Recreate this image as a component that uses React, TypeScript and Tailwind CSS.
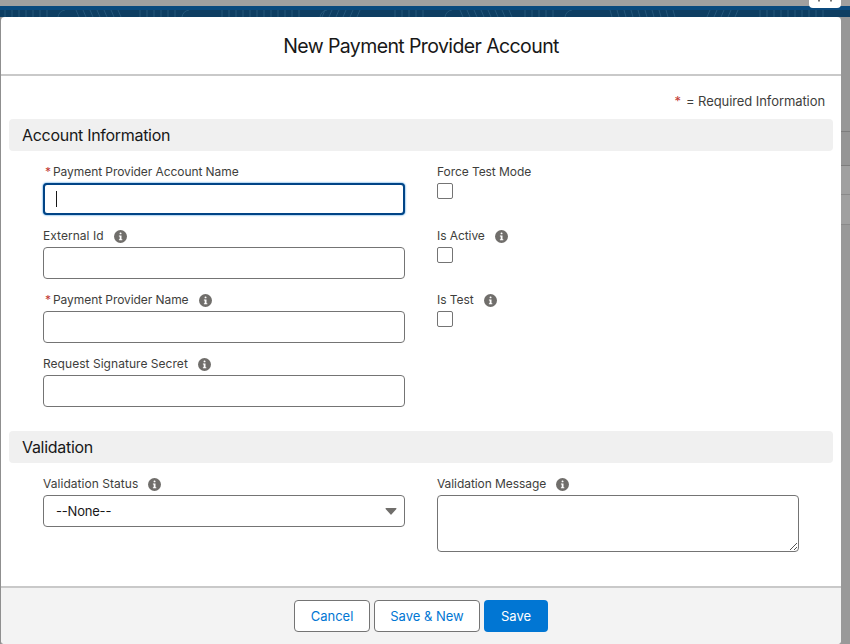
const font = "font-['Inter','Liberation_Sans',sans-serif]";

function Info() {
  return (
    <svg width="13" height="13" viewBox="0 0 13 13" className="shrink-0">
      <circle cx="6.5" cy="6.5" r="6.5" fill="#706e6b" />
      <rect x="5.6" y="2.4" width="1.9" height="1.9" rx="0.9" fill="#fff" />
      <path d="M4.9 5.4h2.6v3.8h.8v1H4.9v-1h.8V6.4h-.8z" fill="#fff" />
    </svg>
  );
}

function Label({ text, required, info, wide }: { text: string; required?: boolean; info?: boolean; wide?: boolean }) {
  return (
    <div className={`flex items-center h-[12px] mb-[5px] text-[12px] leading-[12px] text-[#3e3e3c] ${wide ? "tracking-[0.04px]" : "tracking-[-0.07px]"}`}>
      {required && <span className="text-[#c23934] mr-[2px] w-[8px] text-right">*</span>}
      <span>{text}</span>
      {info && (
        <span className="ml-[10px]">
          <Info />
        </span>
      )}
    </div>
  );
}

function TextField({ text, required, info, focused, wide }: { text: string; required?: boolean; info?: boolean; focused?: boolean; wide?: boolean }) {
  return (
    <div className="h-[64px] pt-[7px]">
      <Label text={text} required={required} info={info} wide={wide} />
      {focused ? (
        <div className="h-[32px] rounded-[4px] bg-white border-[2px] border-[#014486] shadow-[0_0_2px_#0176d3] flex items-center pl-[11px]">
          <div className="w-[1px] h-[16px] bg-[#181818]" />
        </div>
      ) : (
        <div className="h-[32px] rounded-[4px] bg-white border border-[#747474]" />
      )}
    </div>
  );
}

function CheckField({ text, info }: { text: string; info?: boolean }) {
  return (
    <div className="h-[64px] pt-[7px]">
      <Label text={text} info={info} />
      <div className="w-[16px] h-[16px] rounded-[2px] bg-white border border-[#747474]" />
    </div>
  );
}

function Section({ title }: { title: string }) {
  return (
    <div className="h-[32px] mx-[8px] rounded-[4px] bg-[#f0f0f0] flex items-center pl-[13px] text-[16px] tracking-[-0.3px] text-[#181818]">
      {title}
    </div>
  );
}

const groups: [number, number, number][] = [
  [5, 50, 0],
  [76, 122, 3],
  [140, 176, 0],
  [222, 300, 0],
  [325, 366, -3],
  [395, 430, 0],
  [460, 510, 3],
  [525, 560, 0],
  [610, 680, 2],
  [710, 745, -3],
  [760, 830, 0],
];

function Band() {
  const strokes: React.ReactElement[] = [];
  for (const [a, b, lean] of groups) {
    for (let x = a; x < b; x += 7) {
      strokes.push(<path key={x} d={`M${x} 0l${lean} 7`} stroke="#245679" strokeWidth="1" fill="none" />);
    }
  }
  for (const x of [58, 182, 320, 445, 565]) {
    strokes.push(<path key={`c${x}`} d={`M${x} 7q1-6 7-7`} stroke="#245679" strokeWidth="1" fill="none" />);
  }
  return (
    <svg width="850" height="7" className="block">
      {strokes}
    </svg>
  );
}

export default function App() {
  return (
    <div className={`${font} w-[850px] h-[644px] overflow-hidden bg-[#a0a0a0] flex flex-col`}>
      <div className="h-[6px] shrink-0 relative z-10">
        <div className="absolute left-[809px] top-0 w-[32px] h-[8px] rounded-b-[4px] bg-white">
          <svg width="32" height="3" className="block">
            <path d="M10 0v1.500M22 0v1.500" stroke="#777" strokeWidth="2" />
          </svg>
        </div>
      </div>
      <div className="h-[11px] shrink-0 bg-[#0e3e62] border-t-[4px] border-[#0a4a7e] overflow-hidden">
        <Band />
      </div>
      <div className="flex flex-1 min-h-0">
        <div className="w-[1px] bg-[#8f8f8f]" />
        <div className="w-[840px] h-[627px] bg-white rounded-[4px] flex flex-col overflow-hidden">
          <div className="h-[59px] shrink-0 pt-[3px] border-b-[2px] border-[#c9c9c9] flex items-center justify-center text-[19.5px] tracking-[-0.6px] text-[#181818]">
            New Payment Provider Account
          </div>
          <div className="flex-1 flex flex-col">
            <div className="h-[43px] pr-[16px] pt-[8px] flex justify-end items-center text-[13px] text-[#3e3e3c] tracking-[-0.08px]">
              <span className="text-[#c23934] mr-[5px]">*</span>= Required Information
            </div>
            <Section title="Account Information" />
            <div className="px-[42px] pt-[8px] grid grid-cols-2 gap-x-[32px]">
              <div>
                <TextField text="Payment Provider Account Name" required focused />
                <TextField text="External Id" info wide />
                <TextField text="Payment Provider Name" required info />
                <TextField text="Request Signature Secret" info wide />
              </div>
              <div>
                <CheckField text="Force Test Mode" />
                <CheckField text="Is Active" info />
                <CheckField text="Is Test" info />
              </div>
            </div>
            <div className="mt-[16px]">
              <Section title="Validation" />
            </div>
            <div className="px-[42px] pt-[8px] grid grid-cols-2 gap-x-[32px]">
              <div className="pt-[7px]">
                <Label text="Validation Status" info wide />
                <div className="h-[32px] rounded-[4px] bg-white border border-[#747474] flex items-center justify-between pl-[12px] pr-[7px] text-[13px] text-[#181818]">
                  <span className="tracking-[-0.2px] pt-[1px]">--None--</span>
                  <svg width="12" height="7" viewBox="0 0 12 7">
                    <path d="M1 0h10a.6.6 0 0 1 .4 1L6.4 6.6a.6.6 0 0 1-.8 0L.6 1A.6.6 0 0 1 1 0z" fill="#706e6b" />
                  </svg>
                </div>
              </div>
              <div className="pt-[7px]">
                <Label text="Validation Message" info />
                <div className="h-[57px] rounded-[4px] bg-white border border-[#747474] flex items-end justify-end">
                  <svg width="9" height="9" viewBox="0 0 9 9" className="block">
                    <path d="M1 8l7-7M5 8l3-3" stroke="#555" strokeWidth="1" fill="none" />
                  </svg>
                </div>
              </div>
            </div>
          </div>
          <div className="h-[58px] shrink-0 bg-[#f3f3f3] border-t-[2px] border-[#c9c9c9] flex justify-center items-start pt-[12px] gap-[4px] text-[13px]">
            <button className="h-[32px] w-[76px] pt-[1px] rounded-[4px] bg-white border border-[#747474] text-[#0176d3]">Cancel</button>
            <button className="h-[32px] w-[106px] pt-[1px] rounded-[4px] bg-white border border-[#747474] text-[#0176d3]">Save &amp; New</button>
            <button className="h-[32px] w-[64px] pt-[1px] rounded-[4px] bg-[#0176d3] text-white">Save</button>
          </div>
        </div>
        <div className="flex-1 flex flex-col">
          <div className="h-[115px] bg-[#979797] border-b border-[#7d7d7d]" />
          <div className="h-[34px] bg-[#959595] border-b border-[#7d7d7d]" />
          <div className="h-[29px] bg-[#a0a0a0] border-b border-[#8a8a8a]" />
          <div className="h-[30px] bg-[#a0a0a0] border-b border-[#8a8a8a]" />
          <div className="flex-1 bg-[#999999]" />
        </div>
      </div>
    </div>
  );
}
